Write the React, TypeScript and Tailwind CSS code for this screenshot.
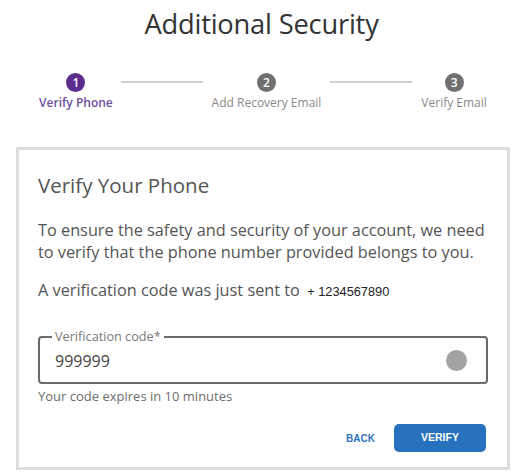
const App = () => {
  return (
    <div className="w-[523px] h-[476px] bg-white font-['Open_Sans',sans-serif] overflow-hidden">
      <h1 className="pt-[5px] text-center text-[27.3px] leading-[38px] text-[#333333] tracking-[-0.2px]">
        Additional Security
      </h1>

      <div className="mt-[30px] flex items-start pl-[39px] pr-[35px]">
        <div className="flex flex-col items-center w-[74px]">
          <div className="w-[19px] h-[19px] rounded-full bg-[#5b2d8e] text-white text-[12px] leading-[19px] text-center font-semibold">
            1
          </div>
          <span className="mt-[3px] text-[12px] leading-[16px] font-semibold text-[#6e4fa0] whitespace-nowrap">
            Verify Phone
          </span>
        </div>
        <div className="mt-[8px] ml-[8px] w-[82px] h-[2px] bg-[#cfcfcf]" />
        <div className="ml-[8px] flex flex-col items-center w-[112px]">
          <div className="w-[19px] h-[19px] rounded-full bg-[#707070] text-white text-[12px] leading-[19px] text-center font-semibold">
            2
          </div>
          <span className="mt-[3px] text-[12px] leading-[16px] text-[#8a8a8a] whitespace-nowrap">
            Add Recovery Email
          </span>
        </div>
        <div className="mt-[8px] ml-[8px] w-[82px] h-[2px] bg-[#cfcfcf]" />
        <div className="ml-[8px] flex flex-col items-center w-[68px]">
          <div className="w-[19px] h-[19px] rounded-full bg-[#707070] text-white text-[12px] leading-[19px] text-center font-semibold">
            3
          </div>
          <span className="mt-[3px] text-[12px] leading-[16px] text-[#8a8a8a] whitespace-nowrap">
            Verify Email
          </span>
        </div>
      </div>

      <div className="mt-[36px] ml-[16px] w-[494px] h-[323px] border-[3px] border-[#dddddd] px-[19px] pt-[21px]">
        <h2 className="text-[20.5px] leading-[28px] text-[#555555]">Verify Your Phone</h2>
        <p className="mt-[20px] text-[16.3px] leading-[22px] text-[#555555]">
          To ensure the safety and security of your account, we need to verify that the phone number
          provided belongs to you.
        </p>
        <p className="mt-[16px] text-[16.3px] leading-[22px] text-[#555555]">
          A verification code was just sent to{" "}
          <span className="ml-[3px] font-['Liberation_Sans',Arial,sans-serif] text-[12.8px] text-[#222222]">
            + 1234567890
          </span>
        </p>

        <div className="relative mt-[33px] w-[450px] h-[48px] border-2 border-[#6b6b6b] rounded-[4px] flex items-center">
          <span className="absolute -top-[10px] left-[12px] bg-white px-[3px] text-[12.7px] leading-[17px] text-[#777777]">
            Verification code*
          </span>
          <span className="ml-[15px] flex-1 text-[16px] leading-[22px] text-[#444444] pt-[2px]">999999</span>
          <div className="mr-[19px] w-[21px] h-[21px] rounded-full bg-[#a3a3a3]" />
        </div>
        <p className="mt-[4px] text-[13px] leading-[17px] text-[#6d6d6d]">Your code expires in 10 minutes</p>

        <div className="mt-[19px] flex justify-end items-center gap-[19px] pr-[2px]">
          <button className="font-['Liberation_Sans',Arial,sans-serif] text-[10px] font-bold text-[#2f74c0]">
            BACK
          </button>
          <button className="w-[92px] h-[28px] rounded-[5px] bg-[#2771bd] text-white text-[10.5px] font-bold font-['Liberation_Sans',Arial,sans-serif]">
            VERIFY
          </button>
        </div>
      </div>
    </div>
  );
};

export default App;
